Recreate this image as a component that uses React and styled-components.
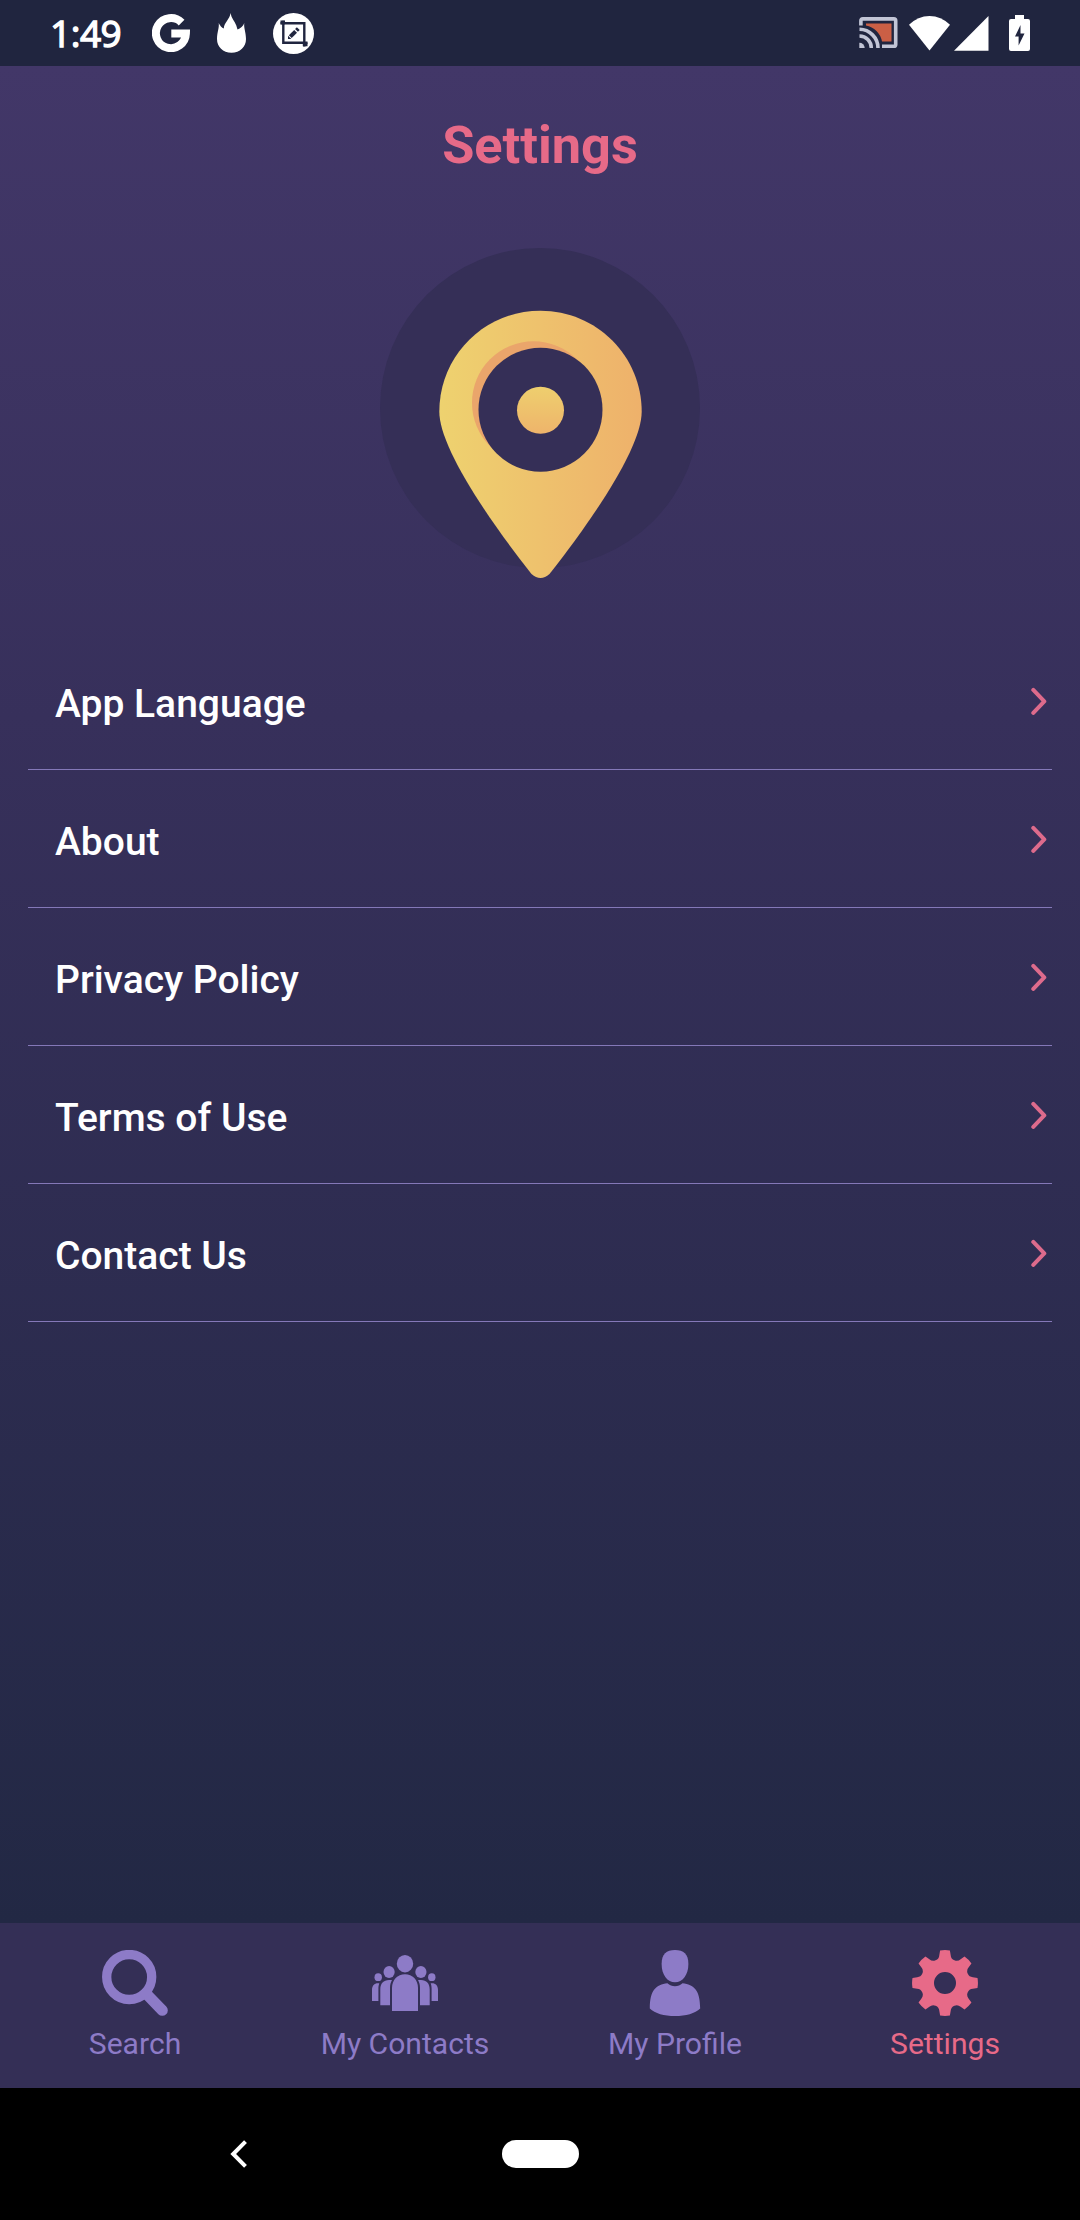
import React from "react";
import styled, { createGlobalStyle } from "styled-components";

const colors = {
  status: "#20253f",
  top: "#423768",
  upper: "#37305b",
  bottom: "#222844",
  panel: "#342f56",
  accent: "#e76a88",
  muted: "#8d7bc7",
  line: "#8478b8",
};

const GlobalStyle = createGlobalStyle`
  *, *::before, *::after { box-sizing: border-box; }
  body { margin: 0; background: #000; }
  svg { display: block; flex: none; }
`;

const Screen = styled.div`
  width: 1080px;
  height: 2220px;
  display: flex;
  flex-direction: column;
  overflow: hidden;
  font-family: Roboto, "Liberation Sans", sans-serif;
`;

const StatusBar = styled.header`
  height: 66px;
  flex: none;
  display: flex;
  justify-content: space-between;
  padding: 0 50px 0 50px;
  background: ${colors.status};
  color: #fff;
`;

const StatusGroup = styled.div`
  display: flex;
  align-items: center;
  gap: ${(p) => p.$gap || 0}px;
`;

const Clock = styled.time`
  width: 75px;
  font-family: "Open Sans", Roboto, sans-serif;
  font-size: 37px;
  font-weight: 500;
  letter-spacing: -0.5px;
  line-height: 66px;
  -webkit-text-stroke: 1.3px #fff;
  white-space: nowrap;
`;

const Page = styled.main`
  flex: 1;
  display: flex;
  flex-direction: column;
  align-items: center;
  background: linear-gradient(${colors.top}, ${colors.upper} 35%, ${colors.bottom});
`;

const Title = styled.h1`
  margin: 0;
  padding-top: 48px;
  font-size: 52.3px;
  font-weight: 700;
  line-height: 62px;
  color: ${colors.accent};
`;

const Hero = styled.div`
  height: 332px;
  margin-top: 72px;
`;

const List = styled.ul`
  list-style: none;
  margin: 52px 0 0;
  padding: 0;
  width: 1024px;
`;

const Row = styled.li`
  height: 138px;
  display: flex;
  align-items: center;
  justify-content: space-between;
  padding: 0 5px 0 27px;
  border-bottom: 1px solid ${colors.line};
`;

const RowLabel = styled.span`
  padding-top: 6px;
  font-size: 39px;
  font-weight: 500;
  color: #fff;
`;

const TabBar = styled.nav`
  height: 165px;
  flex: none;
  display: grid;
  grid-template-columns: repeat(4, 1fr);
  background: ${colors.panel};
`;

const Tab = styled.div`
  display: flex;
  flex-direction: column;
  align-items: center;
  padding-top: 27px;
  color: ${(p) => (p.$active ? colors.accent : colors.muted)};
`;

const TabLabel = styled.span`
  margin-top: 10px;
  font-size: 30.100px;
  line-height: 36px;
`;

const SystemNav = styled.footer`
  height: 132px;
  flex: none;
  display: flex;
  align-items: center;
  gap: 255px;
  padding-left: 230px;
  background: #000;
`;

const HomePill = styled.div`
  width: 77px;
  height: 28px;
  border-radius: 14px;
  background: #fff;
`;

const GoogleIcon = () => (
  <svg width="38" height="38" viewBox="0 0 38 38" fill="none" stroke="#fff" strokeWidth="8">
    <path d="M29.6 8.6A15 15 0 1 0 33.9 19.6H19.3" />
  </svg>
);

const FlameIcon = () => (
  <svg width="29" height="40" viewBox="0 0 29 40" fill="#fff">
    <path d="M13.500 0C14.300 5 17.500 8 19.300 12.500C19.800 14 20 15 20.500 16.500C23.500 15.500 26.200 13 27.300 10C26.600 15 29 19 29 26C29 34 23 39.700 14.500 39.700S0 34 0 26C0 19 2.400 15 1.700 10C2.900 12.500 4.800 14.800 6.800 15.500C6.800 10 13 6 13.500 0Z" />
  </svg>
);

const ScreenshotIcon = () => (
  <svg width="41" height="41" viewBox="0 0 41 41">
    <circle cx="20.500" cy="20.500" r="20.500" fill="#fff" />
    <g fill="none" stroke={colors.status} strokeWidth="2.400">
      <path d="M7.500 10.200H31.300V33.500" />
      <path d="M10.300 7.800V29.800H34.500" />
      <path d="M7.500 9.400H12M29.800 31.400H34.500" strokeWidth="3.600" />
      <path d="M17.300 23.600L22.600 18.300" strokeWidth="4" />
      <path d="M23.500 17.400L25.300 15.600" strokeWidth="4" />
    </g>
    <path d="M15 26V22.700L18.300 26Z" fill={colors.status} />
  </svg>
);

const CastIcon = () => (
  <svg width="39" height="32" viewBox="0 0 39 32" fill="none" stroke="#c2c5d6" strokeWidth="3.600">
    <path d="M7 6.500H32.500V24.500H23A20 20 0 0 0 7 8.500Z" fill="#cb5f45" stroke="none" />
    <path d="M1.900 8.500V3.800Q1.900 1.900 3.800 1.900H34.800Q36.700 1.900 36.700 3.800V27.400Q36.700 29.300 34.800 29.300H23" />
    <path d="M.5 12.300A18.800 18.800 0 0 1 19 31M.5 19A12 12 0 0 1 12.300 31" />
    <path d="M.3 25.800A5.300 5.300 0 0 1 5.700 31H.3Z" fill="#c2c5d6" stroke="none" />
  </svg>
);

const WifiIcon = () => (
  <svg width="41" height="35" viewBox="0 0 41 35" fill="#fff">
    <path d="M0 8.800Q9 0 20.500 0T41 8.800L20.500 34.500Z" />
  </svg>
);

const SignalIcon = () => (
  <svg width="35" height="35" viewBox="0 0 35 35" fill="#fff">
    <path d="M34.500 0V34.700H0Z" />
  </svg>
);

const BatteryIcon = () => (
  <svg width="21" height="36" viewBox="0 0 21 36">
    <path d="M6 0H15V4H19Q21 4 21 6V34Q21 36 19 36H2Q0 36 0 34V6Q0 4 2 4H6Z" fill="#fff" />
    <path d="M11.500 10L6 21.500H9.600V30.500L15.500 18.500H11.500Z" fill={colors.status} />
  </svg>
);

const PinArt = () => (
  <svg width="320" height="332" viewBox="0 0 320 332">
    <defs>
      <linearGradient id="pinFill" x1="0" y1="0" x2="1" y2="0">
        <stop offset="0" stopColor="#eed26f" />
        <stop offset="1" stopColor="#eeb16b" />
      </linearGradient>
      <linearGradient id="dotFill" x1="0" y1="0" x2="0" y2="1">
        <stop offset="0" stopColor="#eecf6e" />
        <stop offset="1" stopColor="#eeb46b" />
      </linearGradient>
    </defs>
    <circle cx="160" cy="160" r="160" fill="#352f57" />
    <path
      d="M160.500 62.700C216.400 62.700 261.700 107.800 261.700 163.700C261.700 195 223 258 169.500 326Q160.500 334 151.500 326C98 258 59.300 195 59.300 163.700C59.300 107.800 104.600 62.700 160.500 62.700Z"
      fill="url(#pinFill)"
    />
    <circle cx="153.500" cy="154.700" r="61.500" fill="#eaa56b" />
    <circle cx="160.500" cy="161.700" r="62" fill="#352f57" />
    <circle cx="160.500" cy="162.300" r="23.500" fill="url(#dotFill)" />
  </svg>
);

const ChevronIcon = () => (
  <svg width="16" height="28" viewBox="0 0 16 28" fill="none" stroke="#dd6b8c" strokeWidth="4" strokeLinecap="round" strokeLinejoin="round">
    <path d="M2.300 2.900L13.300 14.400L2.300 25.900" />
  </svg>
);

const SearchIcon = () => (
  <svg width="66" height="66" viewBox="0 0 66 66" fill="none" stroke="currentColor">
    <circle cx="27.200" cy="27" r="22.500" strokeWidth="9.300" />
    <path d="M44 43.500L60.300 60.300" strokeWidth="11" strokeLinecap="round" />
  </svg>
);

const PeopleSide = () => (
  <>
    <ellipse cx="17.100" cy="22" rx="5.600" ry="6" />
    <path d="M8.300 55.300V39.500C8.300 33.500 11.500 30 17 30H20C18.600 32.500 18 35 18 38V55.300Z" />
    <ellipse cx="6.200" cy="27.200" rx="3.700" ry="3.900" />
    <path d="M0 51V40C0 36 2.300 33.300 6 33.300H7.300C6.600 35.300 6.400 37 6.400 39V51Z" />
  </>
);

const ContactsIcon = () => (
  <svg width="66" height="66" viewBox="0 0 66 66" fill="currentColor">
    <ellipse cx="33" cy="13.700" rx="8.200" ry="8.700" />
    <path d="M20 61V38C20 30 25.500 24.300 33 24.300S46 30 46 38V61Z" />
    <PeopleSide />
    <g transform="translate(66 0) scale(-1 1)">
      <PeopleSide />
    </g>
  </svg>
);

const ProfileIcon = () => (
  <svg width="66" height="66" viewBox="0 0 66 66" fill="currentColor">
    <path d="M33 0C41.500 0 46.400 4 46.400 14C46.400 25 40.500 32.300 33 32.300S19.600 25 19.600 14C19.600 4 24.500 0 33 0Z" />
    <path d="M25.400 33.300C29.500 37.100 36.500 37.100 40.500 33.300C52 35 58.200 40 58.200 58.500C53 63.500 44 66 33 66S13 63.500 7.800 58.500C7.800 40 14 35 25.400 33.300Z" />
  </svg>
);

const gearPath = (() => {
  const spin = (x, y, k) => {
    const a = (k * Math.PI) / 4;
    return `${(33 + x * Math.cos(a) - y * Math.sin(a)).toFixed(2)} ${(33 + x * Math.sin(a) + y * Math.cos(a)).toFixed(2)}`;
  };
  let d = "";
  for (let k = 0; k < 8; k += 1) {
    d += `${k ? "L" : "M"}${spin(-4.9, -32.5, k)}Q${spin(0, -33.4, k)} ${spin(4.9, -32.5, k)}`;
    d += `L${spin(5.700, -27.800, k)}A6 6 0 0 0 ${spin(-5.700, -27.800, k + 1)}`;
  }
  return `${d}ZM44 33A11 11 0 1 0 22 33A11 11 0 1 0 44 33Z`;
})();

const GearIcon = () => (
  <svg width="66" height="66" viewBox="0 0 66 66" fill="currentColor" fillRule="evenodd">
    <path d={gearPath} />
  </svg>
);

const BackIcon = () => (
  <svg width="17" height="28" viewBox="0 0 17 28" fill="none" stroke="#fff" strokeWidth="4">
    <path d="M15.500 1.700L3.200 14L15.500 26.300" />
  </svg>
);

const rows = ["App Language", "About", "Privacy Policy", "Terms of Use", "Contact Us"];

const tabs = [
  { label: "Search", Icon: SearchIcon },
  { label: "My Contacts", Icon: ContactsIcon },
  { label: "My Profile", Icon: ProfileIcon },
  { label: "Settings", Icon: GearIcon, active: true },
];

export default function App() {
  return (
    <Screen>
      <GlobalStyle />
      <StatusBar>
        <StatusGroup $gap={27}>
          <Clock>1:49</Clock>
          <GoogleIcon />
          <FlameIcon />
          <ScreenshotIcon />
        </StatusGroup>
        <StatusGroup $gap={20}>
          <StatusGroup $gap={11}>
            <CastIcon />
            <StatusGroup $gap={4}>
              <WifiIcon />
              <SignalIcon />
            </StatusGroup>
          </StatusGroup>
          <BatteryIcon />
        </StatusGroup>
      </StatusBar>
      <Page>
        <Title>Settings</Title>
        <Hero>
          <PinArt />
        </Hero>
        <List>
          {rows.map((label) => (
            <Row key={label}>
              <RowLabel>{label}</RowLabel>
              <ChevronIcon />
            </Row>
          ))}
        </List>
      </Page>
      <TabBar>
        {tabs.map(({ label, Icon, active }) => (
          <Tab key={label} $active={active}>
            <Icon />
            <TabLabel>{label}</TabLabel>
          </Tab>
        ))}
      </TabBar>
      <SystemNav>
        <BackIcon />
        <HomePill />
      </SystemNav>
    </Screen>
  );
}
